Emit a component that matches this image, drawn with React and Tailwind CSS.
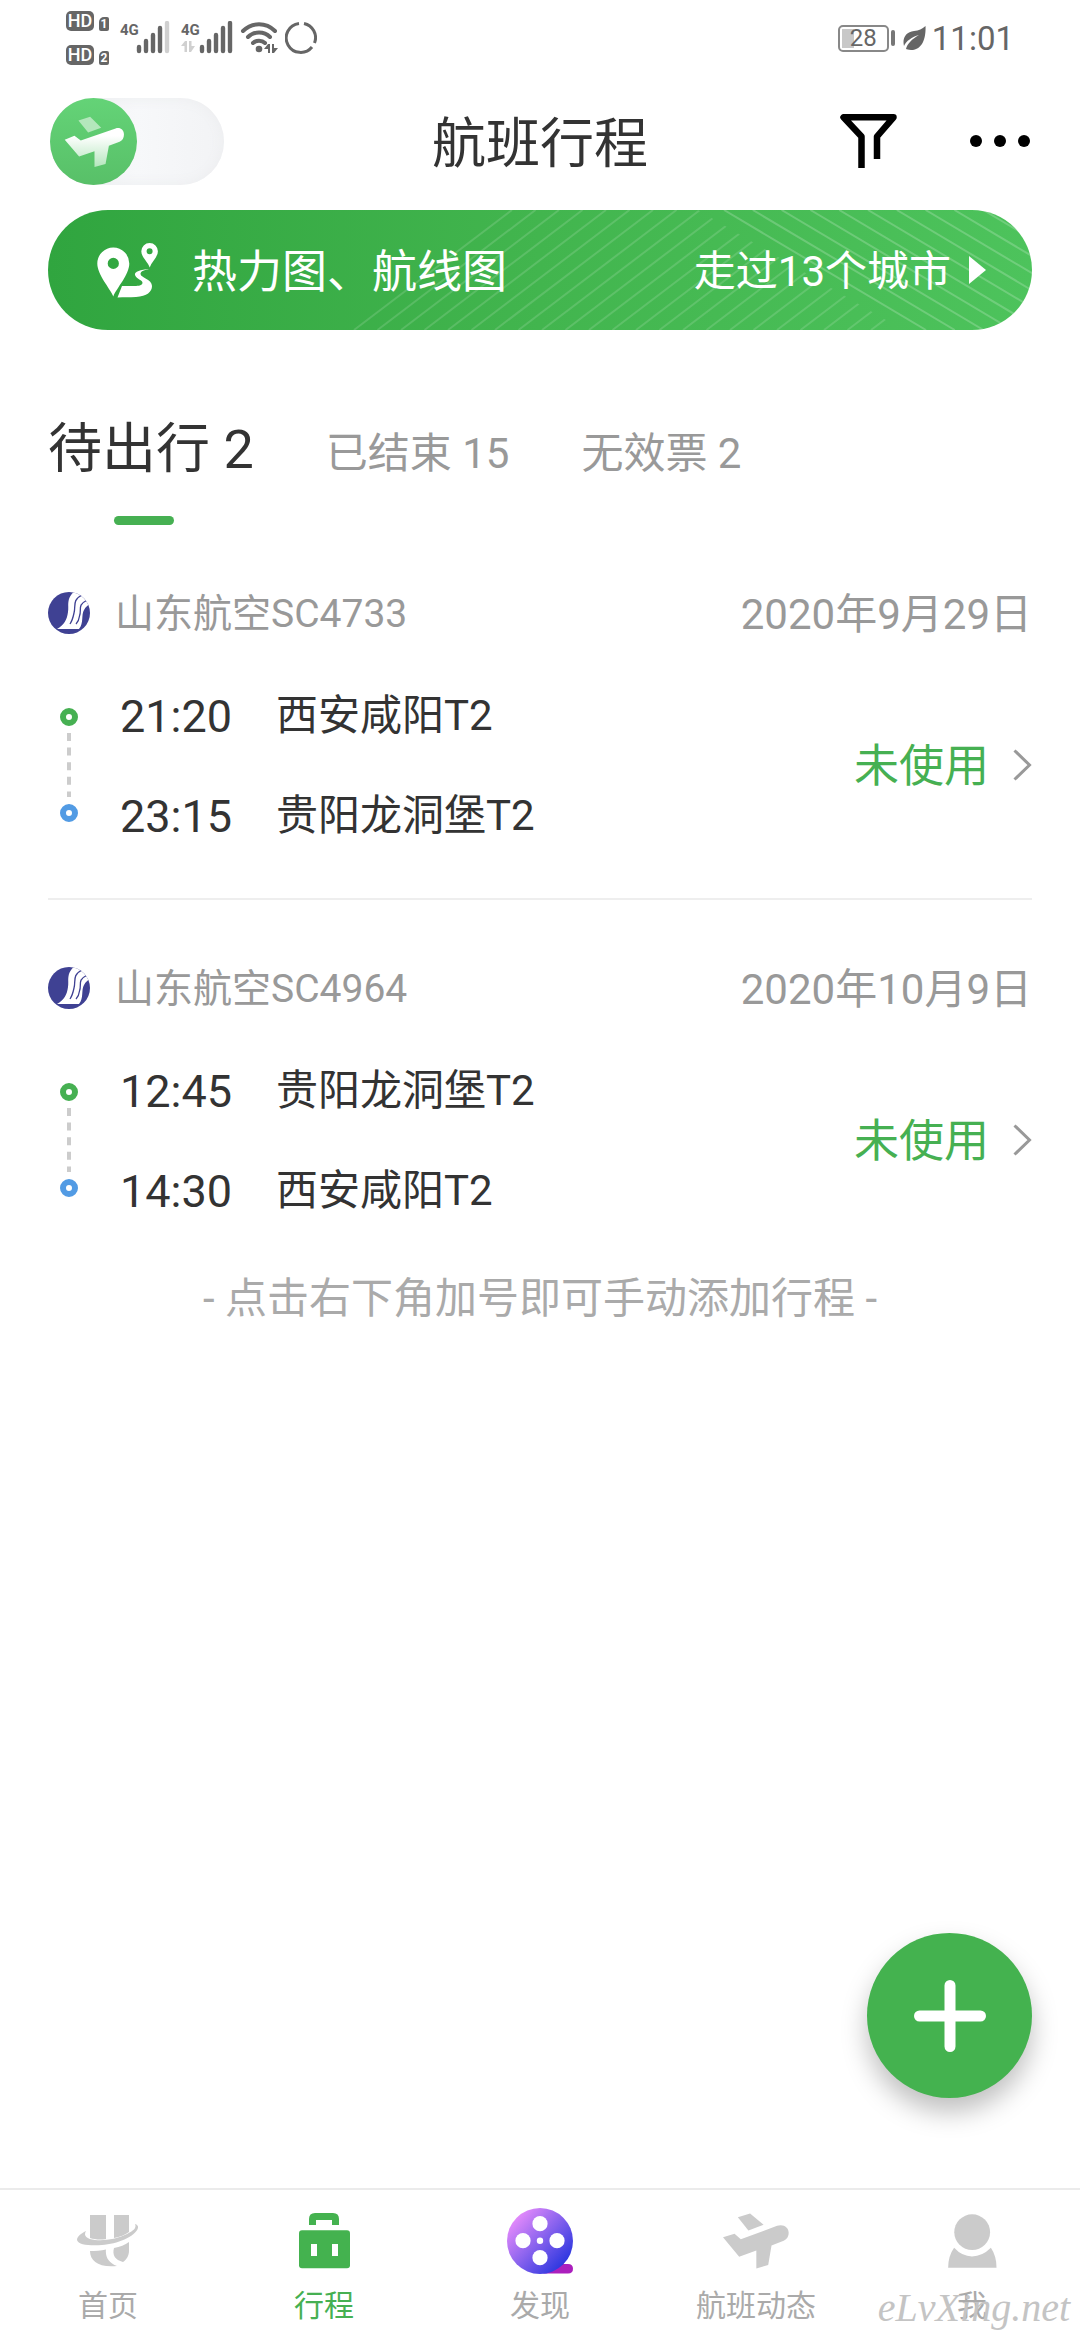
import React, { useState } from "react";

const FLIGHTS = [
  {
    code: "山东航空SC4733",
    date: "2020年9月29日",
    depart: { time: "21:20", place: "西安咸阳T2" },
    arrive: { time: "23:15", place: "贵阳龙洞堡T2" },
    status: "未使用",
  },
  {
    code: "山东航空SC4964",
    date: "2020年10月9日",
    depart: { time: "12:45", place: "贵阳龙洞堡T2" },
    arrive: { time: "14:30", place: "西安咸阳T2" },
    status: "未使用",
  },
];

const TABS = ["待出行 2", "已结束 15", "无效票 2"];

function HdBadge({ sim }) {
  return (
    <div className="flex items-end gap-[5px]">
      <span className="flex h-5 w-7 items-center justify-center rounded-[5px] bg-[#666] text-[18px] leading-none font-medium text-white">
        HD
      </span>
      <span className="flex h-[14px] w-[10px] items-center justify-center rounded-[2px] rounded-tl-[5px] bg-[#666] text-[12px] leading-none font-bold text-white">
        {sim}
      </span>
    </div>
  );
}

function Bars({ full }) {
  const tops = [26, 20, 14, 7, 2];
  return (
    <svg width="34" height="34" viewBox="0 0 34 34" aria-hidden="true">
      {tops.map((t, i) => (
        <path
          key={t}
          d={`M${3 + i * 7} ${t} V30`}
          stroke={i === 4 && !full ? "#d0d0d0" : "#666"}
          strokeWidth="4.4"
          strokeLinecap="round"
        />
      ))}
    </svg>
  );
}

function StatusBar() {
  return (
    <div className="flex h-[76px] items-center justify-between pr-[66px] pl-[66px] text-[#666]">
      <div className="flex items-center">
        <div className="flex flex-col gap-[14px]">
          <HdBadge sim="1" />
          <HdBadge sim="2" />
        </div>
        <div className="ml-[11px] flex items-start">
          <span className="w-4 text-[15px] leading-[18px] font-bold">4G</span>
          <Bars />
        </div>
        <div className="ml-[11px] flex items-start">
          <div className="flex w-[18px] flex-col gap-0.5">
            <span className="text-[15px] leading-[18px] font-bold">4G</span>
            <svg width="14" height="11" viewBox="0 0 14 11" fill="#d0d0d0" aria-hidden="true">
              <path d="M0 5 L4 0 H6 V11 H3.500 V5Z M8 0 H10.500 V5 H14 L10 11 H8Z" />
            </svg>
          </div>
          <Bars full />
        </div>
        <svg className="ml-[7px]" width="38" height="34" viewBox="0 0 38 34" fill="none" aria-label="Wi-Fi">
          <g stroke="#666" strokeWidth="4" strokeLinecap="round">
            <path d="M3 10 C12 1 26 1 35 10" />
            <path d="M8 16 C14 10 24 10 30 16" />
            <path d="M13 22 C16 19 22 19 25 22" />
          </g>
          <circle cx="19" cy="28" r="3.300" fill="#666" />
          <path fill="#666" d="M24 28 L28 23 H30 V32 H28 V28Z M32 23 H34 V27 H38 L34 32 H32Z" />
        </svg>
        <svg className="ml-[7px]" width="32" height="32" viewBox="0 0 32 32" fill="none" stroke="#666" strokeWidth="3" aria-hidden="true">
          <path d="M19 1.500 A14.500 14.500 0 0 1 29.500 21" />
          <path d="M27 25 A14.500 14.500 0 1 1 14 1.500" />
        </svg>
      </div>
      <div className="flex items-center">
        <div className="flex h-[27px] w-[51px] items-center rounded-[5px] border-2 border-[#888] p-0.5">
          <span className="flex h-full w-full items-center justify-center bg-linear-to-r from-[#c8c8c8] from-28% to-transparent to-28% text-[24px] leading-none">
            28
          </span>
        </div>
        <span className="ml-0.5 h-4 w-1 rounded-sm bg-[#777]" />
        <svg className="ml-2" width="24" height="25" viewBox="0 0 24 25" aria-hidden="true">
          <path fill="#666" d="M22.500 0 C23 9 21 24 8 24 C5 24 4 23 3 23 C4 18 9 13 16 9 C9 11 3 15 1 20 C-1 12 3 6 11 5 C16 4.500 19 3 22.500 0Z" />
        </svg>
        <span className="ml-[5px] text-[33px] leading-none">11:01</span>
      </div>
    </div>
  );
}

function TripSwitch() {
  return (
    <label className="relative block h-[87px] w-[174px] cursor-pointer rounded-full bg-linear-to-r from-[#efeff1] via-[#f7f8fa] to-[#f2f3f5] shadow-[inset_0_0_14px_#ecedef]">
      <input type="checkbox" className="peer sr-only" aria-label="飞机行程" />
      <svg className="h-[87px] w-[87px]" viewBox="60 51 260 260" aria-hidden="true">
        <defs>
          <linearGradient id="knob" x1="0" y1="0" x2="0" y2="1">
            <stop offset="0" stopColor="#64d377" />
            <stop offset="1" stopColor="#58c068" />
          </linearGradient>
          <linearGradient id="plane" x1="0" y1="0" x2="0" y2="1">
            <stop offset="0.200" stopColor="#fff" />
            <stop offset="1" stopColor="#b5e6bd" />
          </linearGradient>
        </defs>
        <circle cx="190" cy="181" r="130" fill="url(#knob)" />
        <path d="M145 118 L180 107 L213 140 L174 154Z" fill="#b4e7bc" />
        <path
          d="M104 176 L133 164 L152 178 L256 142 C270 138 281 146 281 160 C281 170 277 178 268 182 L236 194 L226 248 L193 257 V210 L147 226Z"
          fill="url(#plane)"
        />
      </svg>
    </label>
  );
}

function Header() {
  return (
    <header className="grid h-[130px] grid-cols-[1fr_auto_1fr] items-center pr-[50px] pl-[50px]">
      <TripSwitch />
      <h1 className="pt-2 text-[54px] leading-none text-[#333]">航班行程</h1>
      <div className="flex items-center justify-end gap-[73px]">
        <button type="button" aria-label="筛选">
          <svg width="57" height="54" viewBox="0 0 57 54" fill="none" stroke="#000" strokeWidth="6.500" strokeLinejoin="round" aria-hidden="true">
            <path d="M21.500 54 V22.500 L3.500 3.300 H53.500 L37 22.500 V45" />
          </svg>
        </button>
        <button type="button" aria-label="更多" className="flex gap-3">
          <span className="h-3 w-3 rounded-full bg-black" />
          <span className="h-3 w-3 rounded-full bg-black" />
          <span className="h-3 w-3 rounded-full bg-black" />
        </button>
      </div>
    </header>
  );
}

function BannerLines() {
  const left = Array.from({ length: 23 }, (_, i) => 306 + i * 23.5);
  const right = Array.from({ length: 11 }, (_, i) => 676 + i * 28.8);
  return (
    <svg
      className="absolute inset-y-0 right-0 h-full w-[984px]"
      viewBox="0 0 984 120"
      preserveAspectRatio="xMaxYMid slice"
      stroke="#fff"
      strokeWidth="2"
      aria-hidden="true"
    >
      <clipPath id="lower">
        <path d="M0 0 H650 L855 120 H0Z" />
      </clipPath>
      <g clipPath="url(#lower)" strokeOpacity="0.140">
        {left.map((x) => (
          <path key={x} d={`M${x} 120 L${x + 158} 0`} />
        ))}
      </g>
      <g strokeOpacity="0.200">
        {right.map((x) => (
          <path key={x} d={`M${x} 0 L${x + 202} 120`} />
        ))}
      </g>
    </svg>
  );
}

function Banner() {
  return (
    <a
      href="#map"
      className="relative mx-12 mt-1 flex h-[120px] items-center overflow-hidden rounded-full bg-linear-to-r from-[#30a53f] via-[#42b54e] to-[#4dc35c] pr-[46px] pl-[49px] text-white"
    >
      <BannerLines />
      <svg className="relative" width="61" height="55" viewBox="0 0 61 55" fill="#fff" aria-hidden="true">
        <path
          fillRule="evenodd"
          d="M16.300 53.500 C13 45 0.300 32 0.300 20.500 A16 16 0 0 1 32.300 20.500 C32.300 32 19.500 45 16.300 53.500Z M16.300 14.800 A5.600 5.600 0 1 0 16.300 26 A5.600 5.600 0 1 0 16.300 14.800Z"
        />
        <path
          fillRule="evenodd"
          d="M52.700 24.500 C51 19 44.300 14 44.300 8.300 A8.300 8.300 0 0 1 60.900 8.300 C60.900 14 54.500 19 52.700 24.500Z M52.600 5.300 A3 3 0 1 0 52.600 11.300 A3 3 0 1 0 52.600 5.300Z"
        />
        <path d="M52 26 C44 26.500 37 28.500 38 32 C39 36 46 37 45.500 40 C45 43 40 43 36 43 H25 L20.500 54.500 C27 54 32 54.500 39 54 C50 53 55 49 55 43 C55 36 44 35 43.500 31 C43.500 28 48 27 52 26Z" />
      </svg>
      <span className="relative ml-[34px] pt-1 text-[45px] leading-none">热力图、航线图</span>
      <span className="relative ml-auto pt-1 text-[42px] leading-none">走过13个城市</span>
      <svg className="relative ml-[18px]" width="17" height="28" viewBox="0 0 17 28" fill="#fff" aria-hidden="true">
        <path d="M0 0 L17 14 L0 28Z" />
      </svg>
    </a>
  );
}

function Tabs() {
  const [active, setActive] = useState(0);
  return (
    <div role="tablist" className="flex items-baseline gap-[72px] px-12 pt-20">
      {TABS.map((label, i) => (
        <button
          key={label}
          type="button"
          role="tab"
          aria-selected={i === active}
          onClick={() => setActive(i)}
          className={
            i === active
              ? "flex flex-col items-start gap-[26px] text-[54px] leading-[80px] text-[#333]"
              : "text-[42px] leading-[80px] text-[#999]"
          }
        >
          {label}
          {i === active && <span className="ml-[66px] h-[9px] w-[60px] rounded-full bg-[#46b052]" />}
        </button>
      ))}
    </div>
  );
}

function AirlineLogo() {
  return (
    <svg width="42" height="42" viewBox="0 0 42 42" aria-hidden="true">
      <clipPath id="disc">
        <circle cx="21" cy="21" r="21" />
      </clipPath>
      <g clipPath="url(#disc)">
        <rect width="42" height="42" fill="#3f4193" />
        <path d="M27 -1 C18 6 21 13 20 20 C19 28 16 33 9 37 H31 C36 31 33 23 36 18 C38 14 41 13 43 10 V-1Z" fill="#fff" />
        <path d="M34 3 C24 8 28 14 26 21 C25 26 24 29 22 32" fill="none" stroke="#3f4193" strokeWidth="1.300" />
        <path d="M38.500 8.500 C29 13 34 18 31.500 24 C31 28 30 30 28 32" fill="none" stroke="#3f4193" strokeWidth="1.300" />
      </g>
    </svg>
  );
}

function FlightCard({ flight, last }) {
  return (
    <li className={last ? "pt-[58px] pb-[33px]" : "border-b-2 border-[#eee] pt-[58px] pb-[33px]"}>
      <div className="flex h-[60px] items-center">
        <AirlineLogo />
        <span className="ml-[25px] pt-0.5 text-[39px] leading-none text-[#999]">{flight.code}</span>
        <time className="ml-auto pt-1 text-[42px] leading-none text-[#999]">{flight.date}</time>
      </div>
      <a href="#flight" className="mt-[22px] flex items-center">
        <div className="ml-3 flex flex-col items-center">
          <span className="h-[18px] w-[18px] rounded-full border-[6px] border-[#46b052]" />
          <svg className="my-[7px]" width="4" height="64" viewBox="0 0 4 64" aria-hidden="true">
            <path d="M2 0 V64" stroke="#ccc" strokeWidth="4" strokeDasharray="8 6.600" />
          </svg>
          <span className="h-[18px] w-[18px] rounded-full border-[6px] border-[#529be4]" />
        </div>
        <div className="ml-[42px] flex flex-col text-[#333]">
          {[flight.depart, flight.arrive].map((leg) => (
            <div key={leg.time} className="flex h-[100px] items-center gap-11">
              <time className="pt-0.5 text-[45px] leading-none">{leg.time}</time>
              <span className="pt-0.5 text-[42px] leading-none">{leg.place}</span>
            </div>
          ))}
        </div>
        <span className="ml-auto pt-0.5 text-[45px] leading-none text-[#46b052]">{flight.status}</span>
        <svg className="ml-6" width="19" height="32" viewBox="0 0 19 32" fill="none" stroke="#999" strokeWidth="3" aria-hidden="true">
          <path d="M1.500 1.500 L16.500 16 L1.500 30.500" />
        </svg>
      </a>
    </li>
  );
}

function HomeIcon() {
  return (
    <svg width="62" height="52" viewBox="0 0 62 52" fill="#cbcbcb" aria-hidden="true">
      <path d="M13 0 H29 V24 C23 25 18 24.500 13 23Z M37 0 H52 V17 C48 20 43 22 37 23Z" />
      <path d="M9 16 C5 18 0 21 0 25 C1 30 14 31 25 30 C40 29 58 22 61 13 C61.500 11 60 9.500 58 9 C60 13 56 16 50 19 C40 24 28 26 18 25 C10 24 6 21 9 16Z" />
      <path d="M13 36 C18 36 24 35.500 29 34.500 C28 42 32 48 40 51 C22 53 13 46 13 36Z" />
      <path d="M37 33 C43 32 48 30 52 27 V36 C52 41 49 45 46 47 C38 45 35 40 37 33Z" />
    </svg>
  );
}

function CaseIcon() {
  return (
    <svg width="51" height="56" viewBox="0 0 51 56" aria-hidden="true">
      <path d="M10 12 V6 Q10 0 16 0 H34 Q40 0 40 6 V12 H33 V7 H17 V12Z" fill="#44b24f" />
      <rect y="17.300" width="51" height="38" rx="3" fill="#44b24f" />
      <path d="M12 31 H18 V43 H12Z M33 31 H39 V43 H33Z" fill="#fff" />
    </svg>
  );
}

function FilmIcon() {
  return (
    <svg width="66" height="67" viewBox="0 0 66 67" aria-hidden="true">
      <defs>
        <linearGradient id="reel" x1="0.100" y1="0.150" x2="0.850" y2="0.850">
          <stop offset="0" stopColor="#e78bfb" />
          <stop offset="0.500" stopColor="#8a63ee" />
          <stop offset="1" stopColor="#2f38e0" />
        </linearGradient>
      </defs>
      <path d="M36 65.500 L50 56 H61 Q66 56 66 60.700 Q66 65.500 61 65.500Z" fill="#ab1fbd" />
      <circle cx="33" cy="33" r="33" fill="url(#reel)" />
      <g fill="#fff">
        <circle cx="33" cy="15.700" r="7.600" />
        <circle cx="33" cy="49.700" r="7.600" />
        <circle cx="16" cy="32.700" r="7.600" />
        <circle cx="50" cy="32.700" r="7.600" />
        <circle cx="33" cy="32.700" r="3.200" />
      </g>
    </svg>
  );
}

function PlaneIcon() {
  return (
    <svg width="66" height="56" viewBox="250 105 200 168" fill="#cbcbcb" aria-hidden="true">
      <path d="M295 117 L332 106 L373 140 L327 157Z" />
      <path d="M250 178 L285 167 L304 184 L414 143 C434 137 449 148 449 164 C449 178 441 186 430 190 L397 203 L387 262 L351 272 V218 L299 237Z" />
    </svg>
  );
}

function PersonIcon() {
  return (
    <svg width="49" height="54" viewBox="925 105 147 163" fill="#cbcbcb" aria-hidden="true">
      <circle cx="997.500" cy="160" r="54" />
      <path d="M943 207 Q967 233 997 233 Q1028 233 1054 207 Q1071 232 1071 267 H925 Q925 232 943 207Z" />
    </svg>
  );
}

const NAV = [
  { label: "首页", Icon: HomeIcon },
  { label: "行程", Icon: CaseIcon, active: true },
  { label: "发现", Icon: FilmIcon },
  { label: "航班动态", Icon: PlaneIcon },
  { label: "我", Icon: PersonIcon },
];

function BottomNav() {
  return (
    <nav className="sticky bottom-0 mt-auto grid h-[152px] grid-cols-5 border-t-2 border-[#ebebeb] bg-white">
      {NAV.map(({ label, Icon, active }) => (
        <a key={label} href="#nav" className="flex flex-col items-center pt-4">
          <span className="flex h-[70px] items-center">
            <Icon />
          </span>
          <span
            className={
              active
                ? "mt-3 text-[30px] leading-[36px] text-[#46b052]"
                : "mt-3 text-[30px] leading-[36px] text-[#aaa]"
            }
          >
            {label}
          </span>
        </a>
      ))}
      <span className="pointer-events-none absolute right-2.5 bottom-3 font-['Liberation_Serif',serif] text-[40px] leading-none text-[#c4c4c4] italic">
        eLvXing.net
      </span>
    </nav>
  );
}

export default function App() {
  return (
    <div className="flex min-h-screen flex-col bg-white font-['Roboto','Noto_Sans_CJK_SC',sans-serif]">
      <StatusBar />
      <Header />
      <main>
        <Banner />
        <Tabs />
        <ul className="px-12">
          {FLIGHTS.map((f, i) => (
            <FlightCard key={f.code} flight={f} last={i === FLIGHTS.length - 1} />
          ))}
        </ul>
        <p className="text-center text-[42px] leading-[52px] text-[#aaa]">- 点击右下角加号即可手动添加行程 -</p>
      </main>
      <button
        type="button"
        aria-label="添加行程"
        className="fixed right-12 bottom-[242px] flex h-[165px] w-[165px] items-center justify-center rounded-full bg-[#44b24f] shadow-[0_14px_26px_rgba(0,0,0,0.25)]"
      >
        <svg width="72" height="72" viewBox="0 0 72 72" stroke="#fff" strokeWidth="11" strokeLinecap="round" aria-hidden="true">
          <path d="M36 5.500 V66.500 M5.500 36 H66.500" />
        </svg>
      </button>
      <BottomNav />
    </div>
  );
}
